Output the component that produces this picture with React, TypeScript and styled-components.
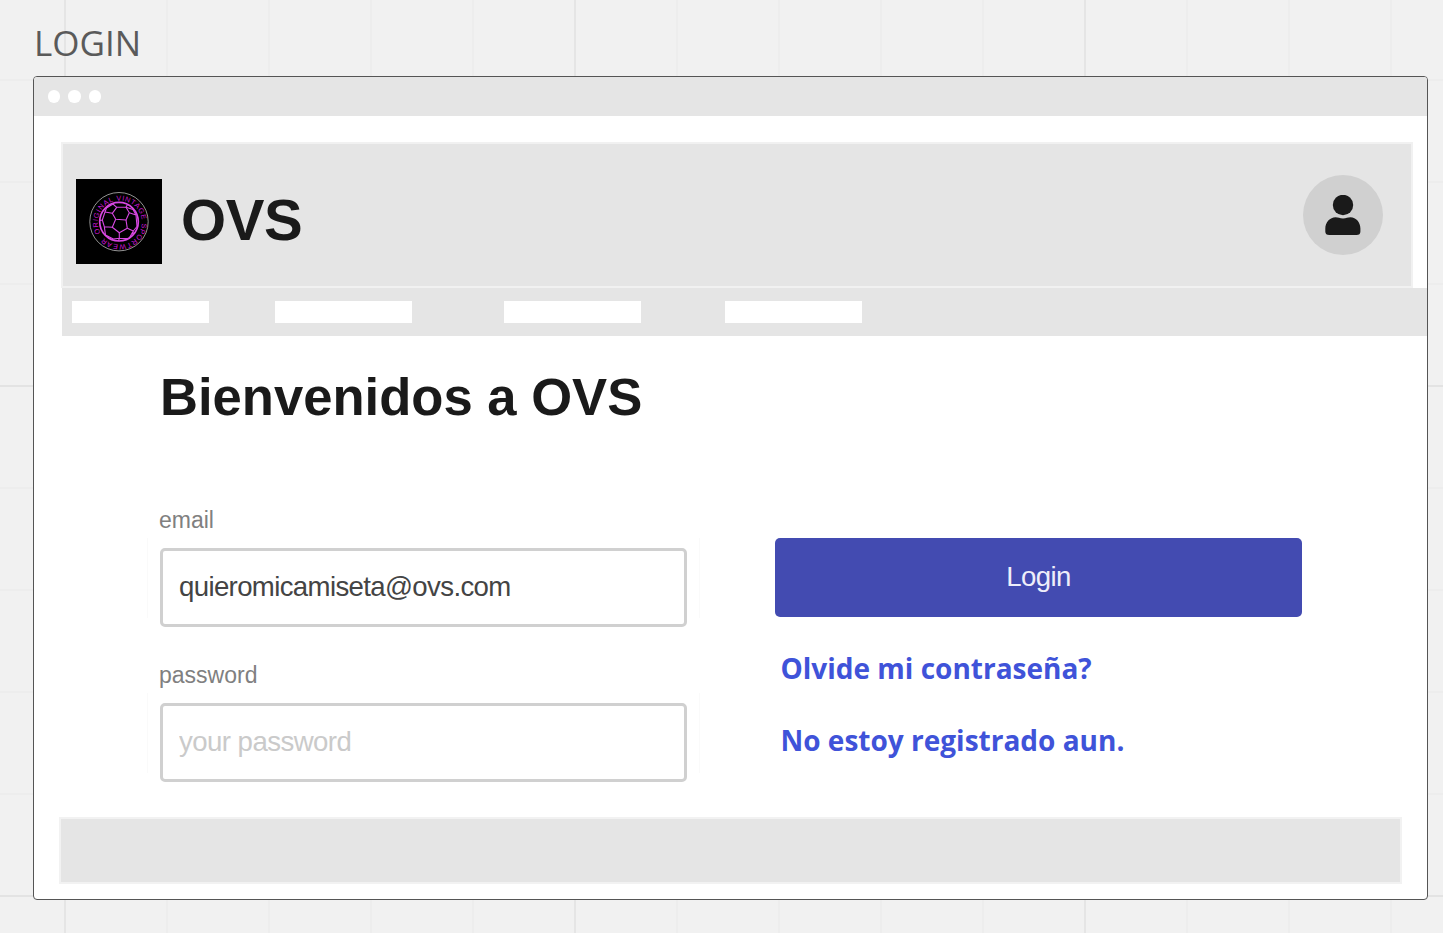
import React from "react";
import styled, { createGlobalStyle } from "styled-components";

const GlobalStyle = createGlobalStyle`
  *, *::before, *::after { box-sizing: border-box; }
  body { margin: 0; overflow: hidden; font-family: "Liberation Sans", Arial, sans-serif; }
`;

const Board = styled.div`
  width: 1443px;
  height: 933px;
  padding: 16px 0 0 33px;
  overflow: hidden;
  background-color: #f1f1f1;
  background-image:
    repeating-linear-gradient(to right, #e5e5e5 0 2px, transparent 2px 510.2px),
    repeating-linear-gradient(to bottom, #e3e3e3 0 2px, transparent 2px 510px),
    repeating-linear-gradient(to right, #ededed 0 2px, transparent 2px 102.04px),
    repeating-linear-gradient(to bottom, #ededed 0 2px, transparent 2px 102px);
  background-size: 2040px 2040px;
  background-position: -446.5px 0, 0 -125px, -446.5px 0, 0 -125px;
`;

const FrameTitle = styled.div`
  height: 60px;
  padding-left: 1px;
  font: 400 35px/54px "Open Sans", sans-serif;
  color: #5a5a5a;
`;

const Window = styled.main`
  width: 1395px;
  height: 824px;
  border: 1px solid #555;
  border-radius: 4px;
  background: #fff;
  overflow: hidden;
`;

const TitleBar = styled.div`
  display: flex;
  gap: 8px;
  height: 39px;
  padding: 13.4px 14px;
  background: #e5e5e5;
`;

const Dot = styled.span`
  width: 12.4px;
  height: 12.4px;
  border-radius: 50%;
  background: #fff;
`;

const Header = styled.header`
  display: flex;
  align-items: flex-start;
  width: 1352px;
  height: 146px;
  margin: 26px 0 0 27px;
  padding: 30px 28px 0 13px;
  border: 2px solid #f1f1f1;
  background: #e5e5e5;
`;

const Logo = styled.svg`
  width: 86px;
  height: 85px;
  margin-top: 5px;
  background: #000;
`;

const Brand = styled.div`
  margin: 11px auto 0 19px;
  font-size: 58px;
  line-height: 70px;
  font-weight: 700;
  letter-spacing: -0.4px;
  color: #1a1a1a;
`;

const Avatar = styled.div`
  display: flex;
  justify-content: center;
  width: 80px;
  height: 80px;
  margin-top: 1px;
  padding-top: 20px;
  border-radius: 50%;
  background: #d0d0d0;
`;

const Nav = styled.nav`
  display: flex;
  height: 48px;
  margin-left: 28px;
  padding: 13px 0 0 10px;
  background: #e5e5e5;
`;

const NavItem = styled.span<{ $gap: number }>`
  width: 137px;
  height: 22px;
  margin-right: ${(p) => p.$gap}px;
  background: #fff;
`;

const Heading = styled.h1`
  height: 64px;
  margin: 29px 0 0 126px;
  font-size: 52.6px;
  line-height: 63px;
  font-weight: 700;
  color: #1a1a1a;
`;

const Content = styled.form`
  display: flex;
  height: 388px;
  padding: 77px 0 0 113px;
`;

const Fields = styled.div`
  width: 553px;
`;

const Field = styled.div`
  height: 155px;
`;

const Label = styled.label`
  display: block;
  height: 32px;
  padding-left: 12px;
  font-size: 23px;
  line-height: 28px;
  color: #808080;
`;

const InputFrame = styled.div`
  height: 89px;
  padding: 10px 0 0 13px;
  background:
    linear-gradient(#fafafa, #fafafa) 0 0 / 1px 80px no-repeat,
    linear-gradient(#fafafa, #fafafa) 552px 0 / 1px 80px no-repeat;
`;

const Input = styled.input`
  display: block;
  width: 527px;
  height: 79px;
  padding: 0 16px 1px;
  border: 3px solid #d0d0d0;
  border-radius: 5px;
  outline: 0;
  background: #fff;
  font: 27.6px "Liberation Sans", Arial, sans-serif;
  letter-spacing: -0.64px;
  color: #444;
  &::placeholder { color: #cacaca; letter-spacing: -0.55px; }
`;

const Actions = styled.div`
  display: flex;
  flex-direction: column;
  align-items: flex-start;
  margin: 32px 0 0 75px;
`;

const LoginButton = styled.button`
  width: 527px;
  height: 79px;
  margin-bottom: 32px;
  padding: 0 0 1px;
  border: 0;
  border-radius: 5px;
  background: #434bb1;
  font: 27.6px "Liberation Sans", Arial, sans-serif;
  letter-spacing: -0.6px;
  color: #eeeefa;
`;

const TextLink = styled.a`
  height: 72px;
  padding-left: 5.5px;
  font: 700 28px/38px "Open Sans", sans-serif;
  color: #3f53d9;
  white-space: nowrap;
`;

const Footer = styled.footer`
  width: 1343px;
  height: 67px;
  margin-left: 25px;
  border: 2px solid #f2f2f2;
  background: #e5e5e5;
`;

const Emblem = () => (
  <Logo viewBox="0 0 86 85">
    <defs>
      <path id="ring" d="M24.5 54.1 A22 22 0 1 1 29.8 60.5 A22 22 0 0 1 24.5 54.1" />
    </defs>
    <circle cx="43" cy="42.7" r="29.2" fill="none" stroke="#b8b8b8" strokeWidth="0.8" />
    <text fill="#cc14d6" fontFamily="Liberation Sans, sans-serif" fontSize="7.2">
      <textPath href="#ring" textLength="132">ORIGINAL VINTAGE SPORTWEAR</textPath>
    </text>
    <g fill="none" stroke="#d848e2" strokeWidth="1.1" strokeLinejoin="round">
      <circle cx="43" cy="42.7" r="19.3" strokeWidth="1.7" />
      <path d="M40.7 28.3H50L53.3 33.7 50 41 39.7 40.3 36.3 34.3Z" />
      <path d="M50 41L51.3 49.3 43.3 53.7 36.3 48.3 39.7 40.3" />
      <path d="M36.3 34.3L29 33 30.5 29 37 25 40.7 28.3M29 33L26.3 41 28.3 47.7 36.3 48.3M26.3 41L23.8 41.5M28.3 47.7L29.5 56M43.3 53.7V59.3L37.3 60 29.5 56M43.3 59.3L42.5 62M51.3 49.3L57.3 52 53 59.5 43.3 59.3M57.3 52L61 47.5 60 36 53.3 33.7M60 36L57 30.5 50 28.3 51.5 25.5M57.3 52L57 55.5" />
    </g>
  </Logo>
);

const UserIcon = () => (
  <svg width="36" height="41" viewBox="0 0 36 41" fill="#1a1a1a">
    <circle cx="18" cy="10" r="10.2" />
    <path d="M4.3 40Q.3 40 .3 36.500V33.500C.3 27.500 5 22.300 10.500 22.300C13.500 22.300 14.500 23.400 18 23.400S22.500 22.300 25.500 22.300C31 22.300 35.400 27.500 35.400 33.500V36.500Q35.400 40 31.400 40Z" />
  </svg>
);

export default function App() {
  return (
    <>
      <GlobalStyle />
      <Board>
        <FrameTitle>LOGIN</FrameTitle>
        <Window>
          <TitleBar>
            <Dot />
            <Dot />
            <Dot />
          </TitleBar>
          <Header>
            <Emblem />
            <Brand>OVS</Brand>
            <Avatar>
              <UserIcon />
            </Avatar>
          </Header>
          <Nav>
            <NavItem $gap={66} />
            <NavItem $gap={92} />
            <NavItem $gap={84} />
            <NavItem $gap={0} />
          </Nav>
          <Heading>Bienvenidos a OVS</Heading>
          <Content>
            <Fields>
              <Field>
                <Label htmlFor="email">email</Label>
                <InputFrame>
                  <Input id="email" defaultValue="quieromicamiseta@ovs.com" />
                </InputFrame>
              </Field>
              <Field>
                <Label htmlFor="password">password</Label>
                <InputFrame>
                  <Input id="password" type="password" placeholder="your password" />
                </InputFrame>
              </Field>
            </Fields>
            <Actions>
              <LoginButton type="button">Login</LoginButton>
              <TextLink>Olvide mi contraseña?</TextLink>
              <TextLink>No estoy registrado aun.</TextLink>
            </Actions>
          </Content>
          <Footer />
        </Window>
      </Board>
    </>
  );
}
